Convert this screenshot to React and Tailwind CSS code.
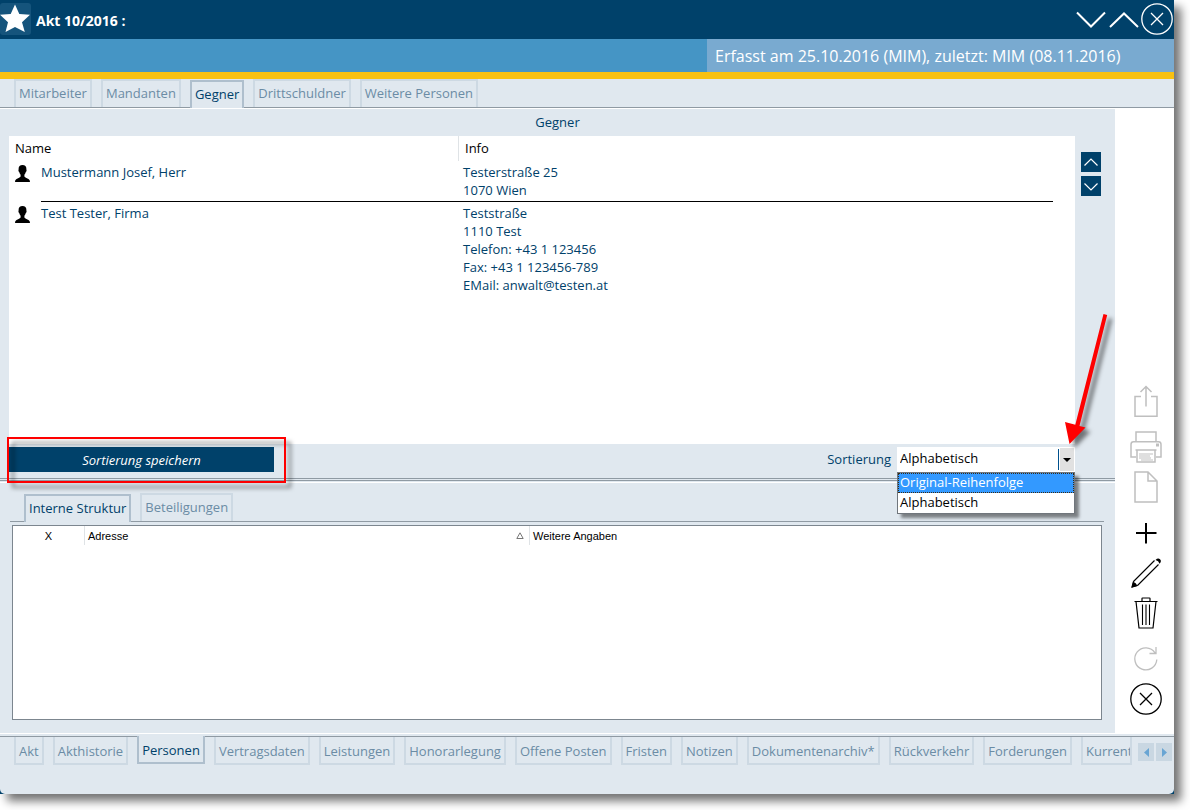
import React, { useState } from "react";

const TOP_TABS = ["Mitarbeiter", "Mandanten", "Gegner", "Drittschuldner", "Weitere Personen"];
const SUB_TABS = ["Interne Struktur", "Beteiligungen"];
const BOTTOM_TABS = [
  "Akt", "Akthistorie", "Personen", "Vertragsdaten", "Leistungen", "Honorarlegung", "Offene Posten",
  "Fristen", "Notizen", "Dokumentenarchiv*", "Rückverkehr", "Forderungen", "Kurrent",
];
const PEOPLE = [
  { name: "Mustermann Josef, Herr", info: ["Testerstraße 25", "1070 Wien"] },
  {
    name: "Test Tester, Firma",
    info: ["Teststraße", "1110 Test", "Telefon: +43 1 123456", "Fax: +43 1 123456-789", "EMail: anwalt@testen.at"],
  },
];
const SORTS = ["Original-Reihenfolge", "Alphabetisch"];

function Tabs({ items, initial, label }) {
  const [active, setActive] = useState(initial);
  return (
    <div role="tablist" aria-label={label} className="flex h-[29px] items-start gap-[9px] border-b border-[#8f9aa3] pl-[14px]">
      {items.map((t) => (
        <button
          key={t}
          role="tab"
          aria-selected={t === active}
          onClick={() => setActive(t)}
          className={
            "h-7 shrink-0 whitespace-nowrap border-x-2 border-t-2 px-[3px] pb-0.5 " +
            (t === active
              ? "mt-px border-[#afbfcd] bg-[#e0e8ef] text-[#00416a]"
              : "border-[#cdd9e3] text-[#6b8ca5]")
          }
        >
          {t}
        </button>
      ))}
    </div>
  );
}

function BottomTabs() {
  const [active, setActive] = useState("Personen");
  return (
    <div role="tablist" aria-label="Aktbereiche" className="flex min-w-0 flex-1 items-start gap-[9px] pl-[14px]">
      {BOTTOM_TABS.map((t, i) => (
        <button
          key={t}
          role="tab"
          aria-selected={t === active}
          onClick={() => setActive(t)}
          className={
            "h-7 whitespace-nowrap border-x-2 border-b-2 px-[3px] pt-0.5 text-left " +
            (i === BOTTOM_TABS.length - 1 ? "min-w-0 overflow-hidden " : "shrink-0 ") +
            (t === active
              ? "-mt-px border-[#afbfcd] bg-[#e0e8ef] text-[#00416a]"
              : "border-[#cdd9e3] text-[#6b8ca5]")
          }
        >
          {t}
        </button>
      ))}
    </div>
  );
}

function ToolButton({ label, muted, children }) {
  return (
    <button aria-label={label} className={"block h-8 w-8 " + (muted ? "text-[#bfbfbf]" : "text-black")}>
      <svg viewBox="0 0 32 32" className="h-8 w-8" fill="none" stroke="currentColor" strokeWidth="1.5">
        {children}
      </svg>
    </button>
  );
}

function PersonIcon() {
  return (
    <svg viewBox="0 0 16 17" className="h-[17px] w-4" fill="#000" aria-hidden="true">
      <path d="M7.500 0C5 0 3.500 1.600 3.600 4c0 .6 0 1-.2 1.400.1.900.4 1.400.8 1.700.2 1.200.8 2 1.400 2.700v1.700c-.5.900-1.600 1.400-3 1.900C1 14 .1 14.600 0 17h15c-.1-2.400-1-3-2.600-3.600-1.400-.5-2.500-1-3-1.900V9.800c.6-.7 1.200-1.500 1.400-2.700.4-.3.700-.8.800-1.700-.2-.4-.2-.8-.2-1.400C11.500 1.600 10 0 7.500 0Z" />
    </svg>
  );
}

export default function App() {
  const [sort, setSort] = useState("Alphabetisch");
  return (
    <div className="flex min-h-screen flex-col overflow-hidden bg-white pb-4 pr-4 font-['Open_Sans','Noto_Sans',sans-serif] text-[13px] leading-[18px] text-[#00416a]">
      <div className="flex flex-1 flex-col bg-[#00416a] shadow-[7px_7px_9px_rgba(0,0,0,0.55)]">
        <header className="flex h-[39px] items-start pt-[3px] text-white">
          <button aria-label="Favorit" className="h-8 w-[31px] rounded-[3px] bg-[#15547c]">
            <svg viewBox="0 0 31 32" className="h-8 w-[31px]" fill="#fff">
              <path d="M15 1.500 19.300 11 30 11.800 22 19.300 24.800 29 15 24 5.500 29 8 19.300 0 11.800 10.700 11Z" />
            </svg>
          </button>
          <h1 className="flex-1 pl-[5px] pt-[9px] text-sm leading-[18px] font-bold">Akt 10/2016 :</h1>
          <div className="flex gap-px pr-px">
            <button aria-label="Nächster" className="h-8 w-8">
              <svg viewBox="0 0 32 32" className="h-8 w-8" fill="none" stroke="#fff" strokeWidth="2"><path d="M2 9.500 16 23.500 30 9.500" /></svg>
            </button>
            <button aria-label="Vorheriger" className="h-8 w-8">
              <svg viewBox="0 0 32 32" className="h-8 w-8" fill="none" stroke="#fff" strokeWidth="2"><path d="M2 24 16 10.500 30 24" /></svg>
            </button>
            <button aria-label="Schließen" className="h-8 w-8">
              <svg viewBox="0 0 32 32" className="h-8 w-8" fill="none" stroke="#fff" strokeWidth="1.300"><circle cx="16" cy="16" r="15.200" /><path d="M10 10 22 22M22 10 10 22" /></svg>
            </button>
          </div>
        </header>

        <div className="flex h-10 justify-end border-b-[7px] border-[#f8c112] bg-[#4595c5]">
          <p className="w-[467px] bg-[#79aad0] px-2 text-base leading-[34px] text-white">
            Erfasst am 25.10.2016 (MIM), zuletzt: MIM (08.11.2016)
          </p>
        </div>

        <div className="flex flex-1 flex-col rounded-b-[5px] bg-[#e0e8ef]">
          <Tabs items={TOP_TABS} initial="Gegner" label="Personengruppen" />

          <div className="flex flex-1 border-y border-white">
            <main className="flex min-w-0 flex-1 flex-col">
              <h2 className="h-[27px] text-center leading-[27px]">Gegner</h2>

              <div className="flex min-h-[308px] gap-1.5 pl-[9px] pr-[14px]">
                <div className="min-w-0 flex-1 bg-white pr-[22px]">
                  <table className="w-full table-fixed border-separate border-spacing-0 text-left">
                    <colgroup>
                      <col className="w-8" />
                      <col className="w-[417px]" />
                      <col />
                    </colgroup>
                    <thead className="text-black">
                      <tr className="h-[25px]">
                        <th colSpan={2} className="p-0 pb-0.5 pl-1.5 font-normal">Name</th>
                        <th className="border-l border-[#dfe3e6] p-0 pb-0.5 pl-1.5 font-normal">Info</th>
                      </tr>
                    </thead>
                    <tbody className="align-top">
                      {PEOPLE.map((p, i) => {
                        const line = i < PEOPLE.length - 1 ? "border-b border-black " : "";
                        return (
                          <tr key={p.name}>
                            <td className="p-0 pl-[6px] pt-1"><PersonIcon /></td>
                            <td className={line + "px-0 py-0.5"}>{p.name}</td>
                            <td className={line + "py-0.5 pl-[5px] pr-0"}>
                              {p.info.map((l) => <div key={l}>{l}</div>)}
                            </td>
                          </tr>
                        );
                      })}
                    </tbody>
                  </table>
                </div>
                <div className="flex w-5 flex-col gap-1 pt-4">
                  <button aria-label="Nach oben" className="h-5 w-5 bg-[#00416a]">
                    <svg viewBox="0 0 20 20" className="h-5 w-5" fill="none" stroke="#fff" strokeWidth="1.200"><path d="M3.500 13.500 10 7l6.500 6.500" /></svg>
                  </button>
                  <button aria-label="Nach unten" className="h-5 w-5 bg-[#00416a]">
                    <svg viewBox="0 0 20 20" className="h-5 w-5" fill="none" stroke="#fff" strokeWidth="1.200"><path d="M3.500 7.500 10 14l6.500-6.500" /></svg>
                  </button>
                </div>
              </div>

              <div className="flex items-start justify-between pb-1.5 pl-[9px] pr-10 pt-[3px]">
                <div className="relative">
                  <button className="block h-[25px] w-[265px] bg-[#00416a] italic text-white">Sortierung speichern</button>
                  <div className="pointer-events-none absolute -left-0.5 -top-[10px] z-10 h-[46px] w-[279px] border-2 border-[#fe0000] drop-shadow-[5px_5px_2px_rgba(0,0,0,0.5)]" />
                </div>
                <div className="flex items-start gap-1.5">
                  <label htmlFor="sort" className="pt-[3px]">Sortierung</label>
                  <div className="relative z-10 flex h-[25px] w-[178px] bg-white text-black">
                    <select
                      id="sort"
                      value={sort}
                      onChange={(e) => setSort(e.target.value)}
                      className="h-[22px] w-full appearance-none bg-transparent pl-[3px] outline-none"
                    >
                      {SORTS.map((s) => <option key={s}>{s}</option>)}
                    </select>
                    <div className="pointer-events-none my-px mr-px flex h-[23px] shrink-0 items-center gap-px">
                      <span className="h-[21px] w-px bg-[#00508c]" />
                      <span className="flex h-[23px] w-[14px] items-center justify-center bg-[#e1e1e1]">
                        <svg viewBox="0 0 8 4" className="h-1 w-2" fill="#000"><path d="M0 0h8L4 4Z" /></svg>
                      </span>
                    </div>
                    <ul role="listbox" aria-label="Sortierung" className="absolute left-0 top-full w-full border border-[#70767c] bg-white shadow-[4px_4px_3px_rgba(0,0,0,0.45)]">
                      <li role="option" aria-selected="true" className="h-5 border border-dotted border-[#3b2a12] bg-[#3399ff] pl-px leading-4 text-white">Original-Reihenfolge</li>
                      <li role="option" aria-selected="false" className="h-5 pl-0.5 leading-[18px]">Alphabetisch</li>
                    </ul>
                    <svg viewBox="0 0 70 150" className="pointer-events-none absolute -right-[50px] -top-[142px] h-[150px] w-[70px] drop-shadow-[5px_4px_2px_rgba(0,0,0,0.5)]" fill="#fe0000" aria-hidden="true">
                      <path d="M48.500 9 52.200 10 24.500 121 30.500 122.500 14.500 139 10 117 20.300 119.700Z" />
                    </svg>
                  </div>
                </div>
              </div>

              <div className="border-b border-white pb-px">
                <div className="h-[3px] border-y border-[#8f9aa3]" />
              </div>

              <section className="flex flex-1 flex-col pb-[13px] pl-[10px] pr-[11px] pt-[10px]">
                <Tabs items={SUB_TABS} initial="Interne Struktur" label="Struktur" />
                <div className="mx-0.5 mt-[3px] min-h-[195px] flex-1 border border-[#7c868f] bg-white">
                  <table className="w-full table-fixed border-separate border-spacing-0 text-left font-['Liberation_Sans',Arial,sans-serif] text-[11px] text-black">
                    <colgroup>
                      <col className="w-[71px]" />
                      <col className="w-[445px]" />
                      <col />
                    </colgroup>
                    <thead>
                      <tr className="h-[19px]">
                        <th className="p-0 text-center font-normal">X</th>
                        <th className="border-l border-[#dfe3e6] p-0 px-[3px] font-normal">
                          <span className="flex items-center justify-between pr-0.5">
                            Adresse
                            <svg viewBox="0 0 8 7" className="h-[7px] w-2" fill="none" stroke="#777" aria-hidden="true"><path d="M4 .8 7.200 6.500H.8Z" /></svg>
                          </span>
                        </th>
                        <th className="border-l border-[#dfe3e6] p-0 pl-[3px] font-normal">Weitere Angaben</th>
                      </tr>
                    </thead>
                  </table>
                </div>
              </section>
            </main>

            <aside className="flex w-[59px] flex-col items-center justify-end gap-[14px] bg-white pb-[18px] pl-[3px]">
              <ToolButton label="Exportieren" muted>
                <path d="M11 11.500H5V31.200H27V11.500H21M16 21.500V1.500M10.500 7 16 1.500 21.500 7" />
              </ToolButton>
              <div className="flex flex-col gap-2">
                <ToolButton label="Drucken" muted>
                  <path d="M6 10.500V1H26V10.500M6 26H1V13.500Q1 10.800 3.500 10.800H28.500Q31 10.800 31 13.500V26H26M5.500 19H26.500M7 19V31H25V19" />
                  <path d="M9 23H23M9 25H20M9 27H21M11 29H23" strokeWidth="1.200" />
                  <path d="M26 12.500h3v3h-3z" fill="currentColor" stroke="none" />
                </ToolButton>
                <ToolButton label="Neues Dokument" muted>
                  <path d="M5 1H18L27 10V31H5ZM18 1V10H27" />
                </ToolButton>
              </div>
              <div className="flex flex-col gap-2">
                <ToolButton label="Hinzufügen">
                  <path d="M16 6V26.500M6 16H26.500" strokeWidth="2" />
                </ToolButton>
                <ToolButton label="Bearbeiten">
                  <path d="M3.500 24.500 24.500 3.500M7.500 28.500 28.500 7.500M3.500 24.500 2 30 7.500 28.500" strokeWidth="1.100" />
                  <path d="M1.500 30.800 3 25Q6.300 25.500 7.200 29ZM25.500 3Q28 .5 30 2.200T29.500 6.800Q28.800 3.800 25.500 3Z" fill="currentColor" stroke="none" />
                </ToolButton>
                <ToolButton label="Löschen">
                  <path d="M4.500 4.500H27.500M12 4V1.500Q12 1 12.500 1H19.500Q20 1 20 1.500V4M6 4.500 9 31H23L26 4.500" strokeWidth="1.200" />
                  <path d="M12.500 7.500V28M16 7.500V28M19.500 7.500V28" strokeWidth="1.100" />
                </ToolButton>
              </div>
              <div className="flex flex-col gap-2">
                <ToolButton label="Aktualisieren" muted>
                  <path d="M26.800 16.500A11 11 0 1 1 25 9.800M26 4V10.500H19.500" strokeWidth="1.300" />
                </ToolButton>
                <ToolButton label="Abbrechen">
                  <circle cx="16" cy="16" r="15.200" strokeWidth="1.300" />
                  <path d="M10 10 22 22M22 10 10 22" strokeWidth="1.300" />
                </ToolButton>
              </div>
            </aside>
          </div>

          <footer className="mt-0.5 flex h-[58px] items-start border-t border-[#8f9aa3]">
            <BottomTabs />
            <div className="flex gap-0.5 pl-1.5 pr-0.5 pt-1.5">
              <button aria-label="Tabs zurück" className="flex h-[18px] w-4 items-center justify-center bg-[#c9d7e2]">
                <svg viewBox="0 0 5 9" className="h-[9px] w-[5px]" fill="#69a5d3"><path d="M5 0v9L0 4.500Z" /></svg>
              </button>
              <button aria-label="Tabs weiter" className="flex h-[18px] w-4 items-center justify-center bg-[#c9d7e2]">
                <svg viewBox="0 0 5 9" className="h-[9px] w-[5px]" fill="#69a5d3"><path d="M0 0v9L5 4.500Z" /></svg>
              </button>
            </div>
          </footer>
        </div>
      </div>
    </div>
  );
}
